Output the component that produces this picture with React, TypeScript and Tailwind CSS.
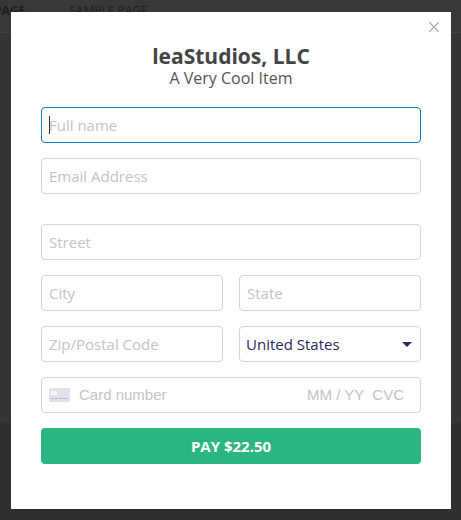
const font = { fontFamily: '"Open Sans", sans-serif' };

function Field({ placeholder, className = "" }: { placeholder: string; className?: string }) {
  return (
    <div className={"flex h-9 items-center rounded border border-[#d5d5d5] bg-white px-[7px] text-[15px] text-[#c4c4c4] " + className}>
      {placeholder}
    </div>
  );
}

export default function App() {
  return (
    <div className="h-[520px] w-[461px] overflow-hidden bg-[#2f2f2f]" style={font}>
      {/* page behind the overlay */}
      <div className="h-[33px] border-b border-[#404040] bg-[#383838]">
        <div className="flex gap-[44px] pt-px text-[12px] leading-[20px] text-[#1f1f1f]">
          <span className="-ml-[6px] font-bold">PAGE</span>
          <span>SAMPLE PAGE</span>
        </div>
      </div>
      <div className="h-[390px] bg-[#353535]" />

      <div className="absolute left-[11px] top-[12px] h-[497px] w-[440px] bg-white px-[30px] pt-[31px]">
        <button className="absolute right-[12px] top-[10px] text-[#a3a3a3]">
          <svg className="block" width="10" height="10" viewBox="0 0 10 10" fill="none" stroke="currentColor" strokeWidth="1.2">
            <path d="M0.3 0.3l9.4 9.4M9.7 0.3l-9.4 9.4" />
          </svg>
        </button>
        <h1 className="text-center text-[21px] font-bold leading-[27px] text-[#444444]">leaStudios, LLC</h1>
        <p className="text-center text-[16px] leading-[16px] text-[#555555]">A Very Cool Item</p>

        <div className="mt-[21px] flex flex-col">
          <div className="flex h-9 items-center rounded border border-[#0f7ac9] bg-white px-[7px] text-[15px] text-[#c4c4c4]">
            <span className="-mr-px h-[18px] w-px bg-[#2d2a5e]" />
            Full name
          </div>
          <Field placeholder="Email Address" className="mt-[15px]" />
          <Field placeholder="Street" className="mt-[30px]" />
          <div className="mt-[15px] grid grid-cols-2 gap-4">
            <Field placeholder="City" />
            <Field placeholder="State" />
          </div>
          <div className="mt-[15px] grid grid-cols-2 gap-4">
            <Field placeholder="Zip/Postal Code" />
            <div className="flex h-9 items-center justify-between rounded border border-[#d5d5d5] bg-white pl-[6px] pr-[8px] text-[15px] text-[#2d2a5e]">
              United States
              <svg width="10" height="5" viewBox="0 0 10 5">
                <path d="M0 0h10L5 5z" fill="#2d2a5e" />
              </svg>
            </div>
          </div>
          <div className="mt-[15px] flex h-9 items-center rounded border border-[#d5d5d5] bg-white pl-[7px] pr-4 text-[15px] text-[#c4c4c4]" style={{ fontFamily: '"Liberation Sans", sans-serif' }}>
            <svg width="21" height="14" viewBox="0 0 21 14">
              <rect width="21" height="14" rx="1" fill="#dfe2ea" />
              <rect x="2" y="3" width="6" height="4" fill="#f5f6f9" />
              <path d="M2 10.5h17" stroke="#b4b8c6" strokeDasharray="3 1" />
            </svg>
            <span className="ml-[9px] flex-1">Card number</span>
            <span>MM / YY</span>
            <span className="ml-2">CVC</span>
          </div>
          <button className="mt-[15px] h-9 rounded bg-[#2bb581] text-[15px] font-bold text-white">PAY $22.50</button>
        </div>
      </div>
    </div>
  );
}
